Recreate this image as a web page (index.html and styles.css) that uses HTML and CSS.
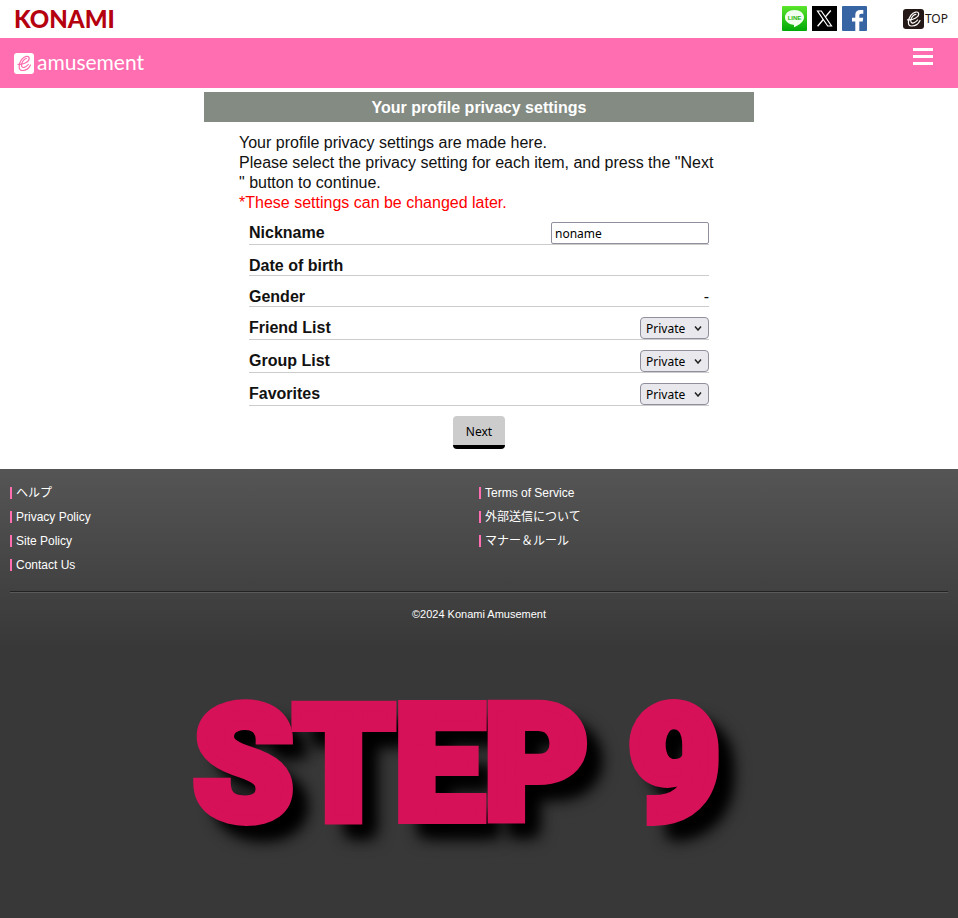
FILE: index.html
```html
<!DOCTYPE html>
<html lang="en">
<head>
<meta charset="utf-8">
<title>e-amusement</title>
<link rel="stylesheet" href="styles.css">
</head>
<body>
<header>
  <div class="topbar">
    <a class="konami" href="#">KONAMI</a>
    <nav class="social">
      <a href="#" aria-label="LINE">
        <svg width="25" height="25" viewBox="0 0 25 25">
          <defs><linearGradient id="lg" x1="0" y1="0" x2="0" y2="1"><stop offset="0" stop-color="#5be52c"/><stop offset="1" stop-color="#00a806"/></linearGradient></defs>
          <rect width="25" height="25" rx="1" fill="url(#lg)"/>
          <path d="M12.500 4C7 4 3 7.200 3 11.400C3 15.200 6.500 18 11.400 18.700C12.500 19 11.800 20 12 21.300C16.500 19 22 15.800 22 11.400C22 7.200 18 4 12.500 4Z" fill="#f2fff0"/>
          <text class="line-label" x="12.500" y="13.500" text-anchor="middle">LINE</text>
        </svg>
      </a>
      <a href="#" aria-label="X">
        <svg width="25" height="25" viewBox="0 0 25 25">
          <rect width="25" height="25" fill="#000"/>
          <path d="M5.500 5H9.300L19.500 20H15.700Z" fill="none" stroke="#fff" stroke-width="1.200"/>
          <path d="M18.800 4.500L13.400 10.900M11.300 13.500L5.600 20.300" stroke="#fff" stroke-width="1.400"/>
        </svg>
      </a>
      <a href="#" aria-label="Facebook">
        <svg width="25" height="25" viewBox="0 0 25 25">
          <rect width="25" height="25" rx="1" fill="#3765a3"/>
          <path d="M13.300 25V15.600H10V11.700H13.300V8.900C13.300 5.600 15.200 4 18.400 4H21.300V7.800H19.300C17.700 7.800 17.300 8.500 17.300 9.800V11.700H21.200L20.700 15.600H17.300V25Z" fill="#fff"/>
        </svg>
      </a>
    </nav>
    <a class="top-link" href="#">
      <svg width="21" height="20" viewBox="0 0 21 20">
        <rect width="21" height="20" rx="3" fill="#231815"/>
        <path d="M4.500 10.800C10 11.500 16 8 15.700 4.900C15.300 1.800 10.500 2.700 7.800 6.300C4.800 10.500 4.300 16.800 8.300 17C12 17.200 15.500 14.800 17 11.500M12.900 5.300C10.500 5.300 8 8.800 7.800 11.500C7.600 14 9.500 14.600 11.500 13.500C12.800 12.900 13.800 12 14.600 11" fill="none" stroke="#fff" stroke-width="1.200" stroke-linecap="round"/>
      </svg>
      <span>TOP</span>
    </a>
  </div>
  <div class="brandbar">
    <a class="brand" href="#">
      <svg width="21" height="21" viewBox="0 0 21 21">
        <rect width="20" height="21" rx="3" fill="#fff"/>
        <path d="M4 11.300C9.500 12 15.500 8.300 15.200 5.200C14.800 2.100 10.200 3 7.500 6.600C4.500 10.800 4 17.300 8 17.500C11.700 17.700 15 15.300 16.500 12M12.600 5.500C10.200 5.500 7.700 9.200 7.500 11.800C7.300 14.500 9.200 15 11.200 14C12.500 13.400 13.500 12.500 14.300 11.500" fill="none" stroke="#ff6eb0" stroke-width="1.200" stroke-linecap="round"/>
      </svg>
      <span>amusement</span>
    </a>
    <button class="menu" type="button" aria-label="Menu"><i></i><i></i><i></i></button>
  </div>
</header>
<main>
  <h1>Your profile privacy settings</h1>
  <form>
    <p>Your profile privacy settings are made here.<br>Please select the privacy setting for each item, and press the "Next<br>" button to continue.<br><span class="note">*These settings can be changed later.</span></p>
    <div class="fields">
      <div class="row"><label for="nick">Nickname</label><input id="nick" type="text" value="noname"></div>
      <div class="row"><b>Date of birth</b></div>
      <div class="row"><b>Gender</b><span class="value">-</span></div>
      <div class="row"><label for="friend">Friend List</label><span class="pick"><select id="friend"><option>Private</option></select><svg width="8" height="5" viewBox="0 0 8 5"><path d="M1 0.500L4 4L7 0.500"/></svg></span></div>
      <div class="row"><label for="group">Group List</label><span class="pick"><select id="group"><option>Private</option></select><svg width="8" height="5" viewBox="0 0 8 5"><path d="M1 0.500L4 4L7 0.500"/></svg></span></div>
      <div class="row"><label for="fav">Favorites</label><span class="pick"><select id="fav"><option>Private</option></select><svg width="8" height="5" viewBox="0 0 8 5"><path d="M1 0.500L4 4L7 0.500"/></svg></span></div>
    </div>
    <button class="next" type="button">Next</button>
  </form>
</main>
<footer>
  <div class="links">
    <ul>
      <li><a href="#" lang="ja">ヘルプ</a></li>
      <li><a href="#">Privacy Policy</a></li>
      <li><a href="#">Site Policy</a></li>
      <li><a href="#">Contact Us</a></li>
    </ul>
    <ul>
      <li><a href="#">Terms of Service</a></li>
      <li><a href="#" lang="ja">外部送信について</a></li>
      <li><a href="#" lang="ja">マナー＆ルール</a></li>
    </ul>
  </div>
  <small>©2024 Konami Amusement</small>
  <div class="step">STEP 9</div>
</footer>
</body>
</html>
```
FILE: styles.css
```css
* { box-sizing: border-box; }
body {
  margin: 0;
  min-height: 100vh;
  display: flex;
  flex-direction: column;
  font: 16px/20px "Liberation Sans", "Noto Sans CJK JP", sans-serif;
  color: #111;
  background: #fff;
}
a { color: inherit; text-decoration: none; }
svg { display: block; }

.topbar { display: flex; align-items: center; height: 38px; padding: 0 10px 1px 14px; }
.konami { margin-right: auto; font: 900 24px/36px Lato, sans-serif; color: #b5000f; }
.social { display: flex; gap: 5px; margin-right: 36px; }
.line-label { font: bold 6px "Liberation Sans", sans-serif; fill: #1fb50d; }
.top-link { display: flex; align-items: center; gap: 1px; font: 12px/20px "Noto Sans", sans-serif; color: #231815; }

.brandbar { display: flex; justify-content: space-between; height: 50px; padding: 0 25px 0 14px; background: #ff6eb0; color: #fff; }
.brand { display: flex; align-items: center; gap: 2px; font: 21px/24px Lato, sans-serif; }
.brand span { padding-bottom: 2px; }
.menu { display: flex; flex-direction: column; gap: 4px; padding: 10px 0; border: 0; background: none; }
.menu i { width: 20px; height: 3px; background: #fff; }

main { width: 100%; max-width: 550px; margin: 4px auto 20px; }
h1 { margin: 0; padding-top: 1px; font-size: 16px; line-height: 29px; text-align: center; color: #fff; background: #838b83; }
form { padding: 11px 35px 0; }
p { margin: 0 0 9px; }
.note { color: #f00; }
.fields { padding: 0 10px; }
.row { display: flex; justify-content: space-between; align-items: flex-start; padding-top: 10px; border-bottom: 1px solid #ccc; }
.row:first-child { padding-top: 0; }
label, b, .value { margin: 1px 0 -1px; }
label, b { font-weight: bold; }
input, select { height: 22px; border: 1px solid #8f8f9d; font: 12px/18px "Noto Sans", sans-serif; color: #000; }
input { width: 158px; padding: 0 3px; border-radius: 2px; background: #fff; }
.pick { display: grid; align-items: center; }
.pick select, .pick svg { grid-area: 1 / 1; }
.pick select { width: 69px; padding: 2px 5px 0; border-radius: 4px; background: #e9e9ed; appearance: none; }
.pick svg { justify-self: end; margin-right: 7px; fill: none; stroke: #222; stroke-width: 1.500; pointer-events: none; }
.next { display: block; height: 33px; margin: 10px auto 0; padding: 2px 13px 0; border: 0; border-bottom: 4px solid #000; border-radius: 4px; background: #ccc; font: 12px/20px "Noto Sans", sans-serif; color: #000; }

footer { flex: 1; padding: 12px 10px 0; color: #fff; background: #383838 linear-gradient(#555, #383838) no-repeat 0 0 / 100% 180px; }
.links { display: grid; grid-template-columns: 1fr 1fr; padding-bottom: 14px; border-bottom: 1px solid #222; box-shadow: 0 1px #5a5a5a; }
ul { margin: 0; padding: 0; list-style: none; font-size: 12px; line-height: 12px; }
li { height: 24px; padding: 6px 0; }
li a { display: block; height: 12px; padding-left: 4px; border-left: 2px solid #ff6eb0; }
small { display: block; margin-top: 12px; font-size: 11px; text-align: center; }
.step { margin-top: 41px; padding-right: 44px; font: 900 160px/200px Roboto, sans-serif; text-align: center; white-space: nowrap; color: #d61158; -webkit-text-stroke: 10px #d61158; text-shadow: 18px 18px 18px #000, 16px 16px 14px #000; }
```
